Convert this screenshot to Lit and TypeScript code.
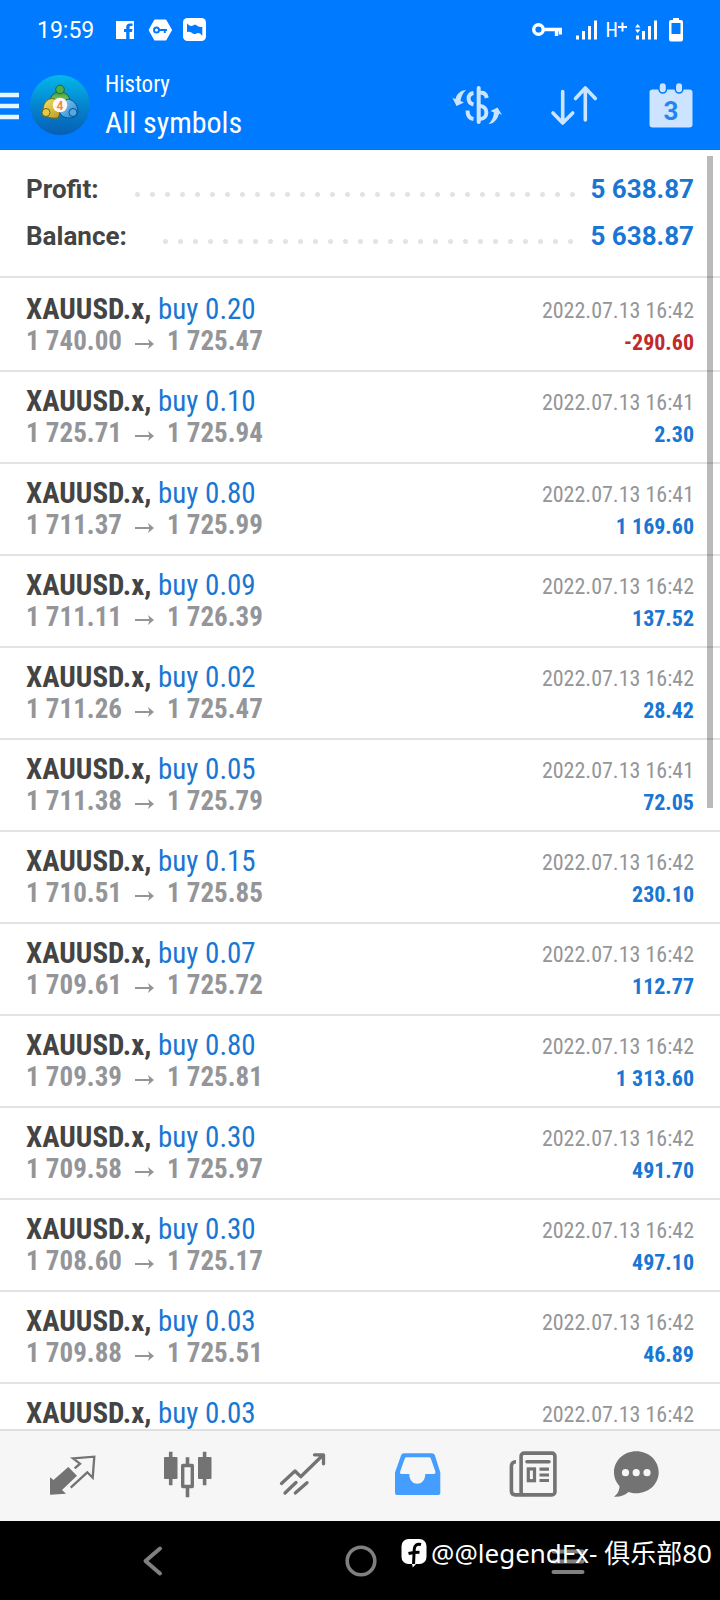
import { LitElement, html, css, svg } from "lit";
import { customElement, property } from "lit/decorators.js";

interface Deal {
  volume: string;
  open: string;
  close: string;
  time: string;
  profit: string;
}

const deal = (volume: string, open: string, close: string, time: string, profit: string): Deal => ({
  volume,
  open,
  close,
  time: `2022.07.13 ${time}`,
  profit,
});

const DEALS: Deal[] = [
  deal("0.20", "1 740.00", "1 725.47", "16:42", "-290.60"),
  deal("0.10", "1 725.71", "1 725.94", "16:41", "2.30"),
  deal("0.80", "1 711.37", "1 725.99", "16:41", "1 169.60"),
  deal("0.09", "1 711.11", "1 726.39", "16:42", "137.52"),
  deal("0.02", "1 711.26", "1 725.47", "16:42", "28.42"),
  deal("0.05", "1 711.38", "1 725.79", "16:41", "72.05"),
  deal("0.15", "1 710.51", "1 725.85", "16:42", "230.10"),
  deal("0.07", "1 709.61", "1 725.72", "16:42", "112.77"),
  deal("0.80", "1 709.39", "1 725.81", "16:42", "1 313.60"),
  deal("0.30", "1 709.58", "1 725.97", "16:42", "491.70"),
  deal("0.30", "1 708.60", "1 725.17", "16:42", "497.10"),
  deal("0.03", "1 709.88", "1 725.51", "16:42", "46.89"),
  deal("0.03", "1 709.88", "1 725.51", "16:42", "46.89"),
];

@customElement("status-bar")
export class StatusBar extends LitElement {
  static styles = css`
    :host {
      display: flex;
      align-items: center;
      justify-content: space-between;
      height: 60px;
      padding: 0 37px;
      color: #fff;
      font-size: 23px;
      line-height: 28px;
    }
    .side {
      display: flex;
      align-items: center;
    }
    .left {
      gap: 11px;
    }
    .clock {
      margin-right: 8px;
      padding-top: 2px;
    }
    .right {
      gap: 8px;
    }
    .key {
      margin-right: 6px;
    }
    .net {
      font: 20px/20px "Roboto Condensed", Roboto, sans-serif;
      display: flex;
    }
    .battery {
      margin-left: 3px;
    }
    svg {
      display: block;
    }
  `;

  render() {
    return html`
      <div class="side left">
        <span class="clock">19:59</span>
        <svg width="24" height="24" viewBox="0 0 24 24" aria-hidden="true">
          <path fill="#fff" d="M3 3h18v18h-4.500v-7h2.500l.5-3h-3V9.500c0-1 .5-1.500 1.500-1.500H19.500V5.500H17c-2.500 0-3.800 1.500-3.800 3.700V11H11v3h2.200v7H3z" />
        </svg>
        <svg width="24" height="24" viewBox="0 0 24 24" aria-hidden="true">
          <path fill="#fff" stroke="#fff" stroke-width="2" stroke-linejoin="round" d="M7 2.500h10.500L23 12l-5.500 9.500H7L1.700 12z" />
          <circle cx="8.500" cy="12" r="2.500" fill="none" stroke="#007aff" stroke-width="2" />
          <path d="M11 12h8M16.800 12v3" stroke="#007aff" stroke-width="2" />
        </svg>
        <svg width="24" height="24" viewBox="0 0 24 24" aria-hidden="true">
          <rect y="0" width="23" height="23" rx="4.500" fill="#fff" />
          <path fill="#007aff" d="M4 5.300c2 2.500 4.500 3.500 6.500 2 1.500-1 2.800-.3 4.500 1 1.300.8 2.800.8 4.300.4v9.300c-1.500-2.500-3.800-4-6-2.500-1.800 1.200-3.300.3-5-1-1.200-.8-2.800-.8-4.300-.5z" />
        </svg>
      </div>
      <div class="side right">
        <svg class="key" width="30" height="16" viewBox="0 0 30 16" aria-hidden="true">
          <circle cx="6.500" cy="7.500" r="4.800" fill="none" stroke="#fff" stroke-width="3.400" />
          <path d="M12 7.500h18M24.500 7.500v6.500M28.500 7.500v5" stroke="#fff" stroke-width="3.400" />
        </svg>
        <svg width="22" height="20" viewBox="0 0 22 20" aria-hidden="true">
          <path d="M1.500 15.500v4M7.500 11v8.500M13.500 6v13.500M19.500.5v19" stroke="#fff" stroke-width="3" />
        </svg>
        <span class="net">H<svg width="9" height="20" viewBox="0 0 9 20" aria-hidden="true"><path d="M0 7h9M4.500 2.500v9" stroke="#fff" stroke-width="2" /></svg></span>
        <svg width="23" height="20" viewBox="0 0 23 20" aria-hidden="true">
          <path d="M2.500 15.500v4M8.500 11v8.500M14.500 6v13.500M20.500.5v19" stroke="#fff" stroke-width="3" />
          <path fill="#fff" d="M0 7.500L2.700 4l2.700 3.500zM0 9.500L2.700 13l2.700-3.500z" />
        </svg>
        <svg class="battery" width="14" height="24" viewBox="0 0 14 24" aria-hidden="true">
          <path fill="#fff" fill-rule="evenodd" d="M4 0h6v2h2q2 0 2 2v17.500q0 2-2 2H2q-2 0-2-2V4q0-2 2-2h2zM2.500 5v11h9V5z" />
        </svg>
      </div>
    `;
  }
}

@customElement("app-header")
export class AppHeader extends LitElement {
  static styles = css`
    :host {
      display: flex;
      align-items: center;
      height: 89px;
      padding-right: 24px;
      color: #fff;
      font-family: "Roboto Condensed", "Liberation Sans Narrow", Roboto, sans-serif;
    }
    button {
      display: block;
      padding: 0;
      border: 0;
      background: none;
    }
    svg {
      display: block;
    }
    .logo {
      margin: 0 15px 0 11px;
    }
    .titles {
      flex: 1;
    }
    .section {
      margin: 0;
      font-size: 23px;
      line-height: 36px;
      font-weight: 400;
    }
    .symbols {
      margin: 0;
      font-size: 30px;
      line-height: 40px;
      font-weight: 400;
    }
    .actions {
      display: flex;
      gap: 47px;
      color: #cce4ff;
    }
    .actions button {
      color: inherit;
    }
    .day {
      font: bold 26px Roboto, sans-serif;
    }
    .four {
      font: bold 12px Roboto, sans-serif;
    }
  `;

  render() {
    return html`
      <button aria-label="Menu">
        <svg width="19" height="32" viewBox="0 0 19 32">
          <path d="M0 6h19M0 17h19M0 28h19" stroke="#e6f6ff" stroke-width="4.500" />
        </svg>
      </button>
      <svg class="logo" width="60" height="60" viewBox="0 0 60 60" role="img" aria-label="MetaTrader 4">
        <defs>
          <linearGradient id="sky" x1="0" y1="0" x2="0" y2="1">
            <stop offset="0" stop-color="#04b8ea" />
            <stop offset=".5" stop-color="#0585d0" />
            <stop offset="1" stop-color="#065fb4" />
          </linearGradient>
          <linearGradient id="green" x1="0" y1="0" x2="0" y2="1">
            <stop offset="0" stop-color="#3f9c3c" />
            <stop offset="1" stop-color="#a8dc78" />
          </linearGradient>
          <linearGradient id="gold" x1="0" y1="0" x2="1" y2="1">
            <stop offset="0" stop-color="#f4e36a" />
            <stop offset="1" stop-color="#b99622" />
          </linearGradient>
          <linearGradient id="blue" x1="0" y1="0" x2="1" y2="1">
            <stop offset="0" stop-color="#8fd6f8" />
            <stop offset="1" stop-color="#2480cc" />
          </linearGradient>
        </defs>
        <circle cx="30" cy="30" r="30" fill="url(#sky)" />
        <path d="M30 17c7 0 11 5 10 13H20c-1-8 3-13 10-13z" fill="url(#green)" stroke="#17683a" />
        <path d="M25 24c-6-2-12 3-12 11 0 6 6 9 15 8l3-7z" fill="url(#gold)" stroke="#6f6414" />
        <path d="M37 24c5 0 11 5 11 12 0 7-9 9-16 5l-4-6z" fill="url(#blue)" stroke="#0d4f90" />
        <circle cx="30" cy="14.500" r="4.300" fill="#52ad48" stroke="#17683a" />
        <circle cx="16" cy="37.500" r="4" fill="#e5cb45" stroke="#6f6414" />
        <circle cx="43" cy="37.500" r="4" fill="#4faae6" stroke="#0d4f90" />
        <circle cx="30" cy="30" r="7.300" fill="#fdf8f2" />
        <text class="four" x="30" y="34.500" text-anchor="middle" fill="#f08a3c">4</text>
      </svg>
      <div class="titles">
        <h2 class="section">History</h2>
        <h1 class="symbols">All symbols</h1>
      </div>
      <div class="actions">
        <button aria-label="Currency">
          <svg width="50" height="50" viewBox="0 0 50 50">
            <g fill="currentColor">
              <path d="M14 10C9 10 4.500 14 3.500 19L.5 18l4 8 7.500-3.500L8.500 21C9 17 10.500 13 14 10z" />
              <path d="M36.500 44c5 0 9.500-5 10.500-10.500l3 1.500-4.500-7.500-7 3.500 3.500 1.500c-.5 4.500-2 8.500-5.500 11.500z" />
            </g>
            <g fill="none" stroke="currentColor" stroke-width="4">
              <path d="M26.700 8v34" stroke-linecap="round" />
              <path d="M21.500 13c-6.500 1-6.500 10 0 11.500M15.500 30.500c0 4.500 2 8 6 8.500M28 13c4-.8 6 1 6.800 5M28 26c8.500 0 8.500 13 0 13" />
            </g>
          </svg>
        </button>
        <button aria-label="Sort">
          <svg width="50" height="50" viewBox="0 0 50 50" fill="none" stroke="currentColor" stroke-width="3.600" stroke-linecap="round" stroke-linejoin="round">
            <path d="M13.700 11.500V43M4 33l9.700 10 10-10M36.300 40V8M26.500 18.500L36.300 8l10 10.500" />
          </svg>
        </button>
        <button aria-label="Period">
          <svg width="50" height="50" viewBox="0 0 50 50">
            <rect x="3.500" y="9.500" width="43" height="38" rx="3" fill="currentColor" />
            <g fill="currentColor" stroke="#007aff" stroke-width="1.500">
              <rect x="13" y="2.500" width="7.500" height="10.500" rx="3.700" />
              <rect x="29.300" y="2.500" width="7.500" height="10.500" rx="3.700" />
            </g>
            <text class="day" x="25" y="39.500" text-anchor="middle" fill="#2286f2">3</text>
          </svg>
        </button>
      </div>
    `;
  }
}

@customElement("deal-row")
export class DealRow extends LitElement {
  @property({ attribute: false }) deal!: Deal;

  static styles = css`
    :host {
      display: flex;
      flex: none;
      justify-content: space-between;
      height: 90px;
      padding: 0 26px;
      border-bottom: 2px solid #e3e3e3;
      font-family: "Roboto Condensed", "Liberation Sans Narrow", Roboto, sans-serif;
      box-sizing: content-box;
    }
    .main,
    .meta {
      display: flex;
      flex-direction: column;
      padding-top: 13px;
      line-height: 32px;
      white-space: nowrap;
    }
    .main {
      font-size: 29px;
    }
    .meta {
      font-size: 22px;
      padding-top: 15px;
      text-align: right;
    }
    .symbol {
      font-weight: 700;
      color: #444;
    }
    .side {
      color: #1976d2;
    }
    .prices {
      font-size: 27px;
      font-weight: 700;
      color: #949599;
      display: flex;
      align-items: center;
    }
    .arrow {
      margin: 6px 13px 0;
    }
    .time {
      color: #949599;
    }
    .profit {
      font-weight: 700;
      color: #1976d2;
    }
    .loss {
      color: #c02a2a;
    }
  `;

  render() {
    const d = this.deal;
    const loss = d.profit.startsWith("-");
    return html`
      <div class="main">
        <div><span class="symbol">XAUUSD.x,</span> <span class="side">buy ${d.volume}</span></div>
        <div class="prices">
          <span>${d.open}</span>
          <svg class="arrow" width="19" height="12" viewBox="0 0 19 12" role="img" aria-label="to">
            <path d="M0 6h16" stroke="#949599" stroke-width="2" />
            <path d="M13 1l6 5-6 5 1.500-5z" fill="#949599" />
          </svg>
          <span>${d.close}</span>
        </div>
      </div>
      <div class="meta">
        <time class="time">${d.time}</time>
        <span class="profit ${loss ? "loss" : ""}">${d.profit}</span>
      </div>
    `;
  }
}

const TABS = [
  {
    label: "Quotes",
    icon: svg`
      <path fill="currentColor" d="M2 28.300L5.500 31l14.800-13 8.700 8.700L14 41l4 3.700-16 1z" />
      <path fill="none" stroke="currentColor" stroke-width="2.300" d="M26.700 19.300l5.300-4.600-7-5.400 21.300-1.600-1.600 21-5.400-5.400-16.600 15.400" />`,
  },
  {
    label: "Charts",
    icon: svg`
      <g fill="currentColor">
        <rect x="1" y="8" width="13.500" height="22" rx="1" />
        <rect x="35" y="8" width="13.500" height="22" rx="1" />
      </g>
      <rect x="19.700" y="16.500" width="9.600" height="21" fill="none" stroke="currentColor" stroke-width="3.400" stroke-linejoin="round" />
      <path stroke="currentColor" stroke-width="3.600" d="M7.700 2.700v33.500M41.600 2.700v33.500M24.500 8.300V17M24.500 38v10.300" />`,
  },
  {
    label: "Trade",
    icon: svg`
      <path fill="none" stroke="currentColor" stroke-width="3.300" stroke-linecap="round" stroke-linejoin="round"
        d="M3.500 34.500L17 22l5.700 5.700L44.500 6.500M36.500 5.800h9v9M7 44l11-10.500M17.300 44L29 33.700" />`,
  },
  {
    label: "History",
    icon: svg`
      <path fill="currentColor" fill-rule="evenodd"
        d="M11 4.300h28q2 0 2.800 1.700l5.500 17.500V44q0 2-2 2H4q-2 0-2-2V23.500L8.200 6Q9 4.300 11 4.300zM13.500 8.300q-1.200 0-1.700 1.200L7 23q-.3 2 1.300 2h8c0 13 16 13 16 0h8.500q2 0 1.700-2L37.800 9.500q-.5-1.200-1.800-1.200z" />`,
  },
  {
    label: "News",
    icon: svg`
      <g fill="none" stroke="currentColor" stroke-width="3.600">
        <rect x="13.100" y="4.100" width="33.800" height="41.800" rx="3" />
        <path d="M8 12.800q-4.600 0-4.600 5V42q0 3.900 4 3.900h8" />
        <path d="M19 12.700h22" stroke-linecap="round" />
      </g>
      <g fill="none" stroke="currentColor" stroke-width="3.200">
        <rect x="20.300" y="19.900" width="6.200" height="11.800" />
        <path d="M31.500 20.200H41M31.500 26H41M31.500 31.500H41" />
      </g>`,
  },
  {
    label: "Messages",
    icon: svg`
      <path fill="currentColor" d="M25.300 2.300C13 2.300 3 11.500 3 23.300c0 6 2.500 10.500 5.500 13.700C8.500 42 6 45.500 3 47.700c6 .3 11-1.200 14.500-4.700 2.500 1 5 1.300 7.800 1.300 12.400 0 22.400-9.300 22.400-21S37.700 2.300 25.300 2.300z" />
      <g fill="#f6f6f6"><circle cx="14.500" cy="23.700" r="3.600" /><circle cx="25.200" cy="23.700" r="3.600" /><circle cx="36" cy="23.700" r="3.600" /></g>`,
  },
];

@customElement("tab-bar")
export class TabBar extends LitElement {
  static styles = css`
    :host {
      display: grid;
      grid-template-columns: repeat(5, 115fr) 92fr;
      flex: none;
      align-items: center;
      height: 86px;
      padding: 0 38px 4px 15px;
      border-top: 2px solid #e0e0e0;
      background: #f6f6f6;
      box-sizing: content-box;
    }
    .tab {
      display: flex;
      justify-content: center;
      padding: 0;
      border: 0;
      background: none;
      color: #737373;
    }
    .active {
      color: #459dff;
    }
  `;

  render() {
    return TABS.map(
      (tab) => html`
        <button class="tab ${tab.label === "History" ? "active" : ""}" aria-label=${tab.label}>
          <svg width="50" height="50" viewBox="0 0 50 50">${tab.icon}</svg>
        </button>
      `
    );
  }
}

@customElement("system-nav")
export class SystemNav extends LitElement {
  static styles = css`
    :host {
      display: flex;
      flex: none;
      justify-content: space-between;
      position: relative;
      height: 79px;
      padding: 0 132px 0 133px;
      background: #000;
    }
    button {
      display: flex;
      align-items: center;
      padding: 0;
      border: 0;
      background: none;
    }
    .mark {
      position: absolute;
      right: 8px;
      top: 13px;
      display: flex;
      align-items: center;
      gap: 4px;
      color: #fff;
      font: 26px/38px "Noto Sans", "Noto Sans CJK SC", sans-serif;
      white-space: nowrap;
    }
  `;

  render() {
    return html`
      <button aria-label="Back">
        <svg width="40" height="40" viewBox="0 0 40 40">
          <path d="M27 7.500L12.500 20 27 32.500" fill="none" stroke="#808080" stroke-width="4" stroke-linecap="round" stroke-linejoin="round" />
        </svg>
      </button>
      <button aria-label="Home">
        <svg width="40" height="40" viewBox="0 0 40 40">
          <circle cx="20" cy="20" r="13.800" fill="none" stroke="#808080" stroke-width="3.600" />
        </svg>
      </button>
      <button aria-label="Recents">
        <svg width="40" height="40" viewBox="0 0 40 40">
          <path d="M5.500 10.500h29M5.500 20.500h29M5.500 31h29" stroke="#808080" stroke-width="4" stroke-linecap="round" />
        </svg>
      </button>
      <div class="mark">
        <svg width="26" height="30" viewBox="0 0 26 30" aria-hidden="true">
          <rect x=".5" y="1" width="25" height="25" rx="7" fill="#fff" />
          <path d="M20 6.500c-4-1-6.500.5-6.800 5L12.500 27M7.500 15.500c4-1 7-1.300 11-1.300" fill="none" stroke="#000" stroke-width="3" />
          <path d="M11 26h4l-3.200 3.500z" fill="#fff" />
        </svg>
        <span>@@legendFx- 俱乐部80</span>
      </div>
    `;
  }
}

@customElement("app-root")
export class AppRoot extends LitElement {
  static styles = css`
    :host {
      display: flex;
      flex-direction: column;
      height: 100vh;
      overflow: hidden;
      background: #fff;
      font-family: Roboto, sans-serif;
    }
    .top {
      flex: none;
      background: #007aff;
      border-bottom: 1px solid #1f6fc4;
    }
    .history {
      flex: 1;
      min-height: 0;
      position: relative;
      display: flex;
      flex-direction: column;
      overflow: hidden;
    }
    .summary {
      flex: none;
      margin: 0;
      padding: 16px 26px;
      border-bottom: 2px solid #e3e3e3;
    }
    .total {
      display: flex;
      align-items: center;
      font-size: 26px;
      line-height: 47px;
      font-weight: 700;
    }
    dt {
      color: #444;
    }
    dd {
      margin: 0;
      color: #1976d2;
    }
    .leader {
      flex: 1;
      height: 5px;
      margin: 10px 10px 0 31px;
      background: radial-gradient(circle, #e3e3e3 2px, transparent 3px) 0 0 / 15px 5px repeat-x;
    }
    .deals {
      flex: none;
      padding-top: 2px;
    }
    .scrollbar {
      position: absolute;
      top: 6px;
      right: 7px;
      width: 6px;
      height: 51%;
      background: rgba(0, 0, 0, 0.27);
    }
  `;

  render() {
    return html`
      <div class="top">
        <status-bar></status-bar>
        <app-header></app-header>
      </div>
      <main class="history">
        <dl class="summary">
          <div class="total"><dt>Profit:</dt><span class="leader"></span><dd>5 638.87</dd></div>
          <div class="total"><dt>Balance:</dt><span class="leader"></span><dd>5 638.87</dd></div>
        </dl>
        <div class="deals">${DEALS.map((d) => html`<deal-row .deal=${d}></deal-row>`)}</div>
        <div class="scrollbar"></div>
      </main>
      <tab-bar></tab-bar>
      <system-nav></system-nav>
    `;
  }
}
